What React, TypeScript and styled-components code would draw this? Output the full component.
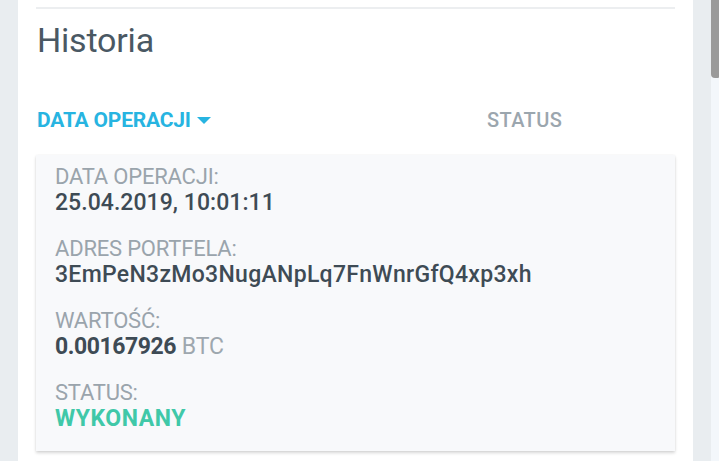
import React from "react";
import styled, { createGlobalStyle } from "styled-components";

const Global = createGlobalStyle`
  html, body { margin: 0; padding: 0; }
  body {
    background: #e9edf0;
    font-family: Roboto, "Liberation Sans", sans-serif;
    overflow: hidden;
  }
`;

const Page = styled.div`
  display: flex;
  height: 461px;
  width: 719px;
`;

const Gutter = styled.div<{ $w: number }>`
  width: ${(p) => p.$w}px;
  flex: none;
  background: #e9edf0;
`;

const Track = styled.div`
  width: 8px;
  flex: none;
  background: #f3f7fb;
  display: flex;
  flex-direction: column;
`;

const Thumb = styled.div`
  height: 78px;
  background: #9a9a9a;
  border-bottom-left-radius: 4px;
  border-bottom-right-radius: 1px;
`;

const Panel = styled.main`
  width: 675px;
  flex: none;
  background: #ffffff;
  box-sizing: border-box;
  padding: 7px 18px 0;
  display: flex;
  flex-direction: column;
`;

const Divider = styled.div`
  height: 2px;
  background: #eceef0;
`;

const Title = styled.h1`
  margin: 11px 0 0 1px;
  font-size: 34px;
  line-height: 40px;
  font-weight: 400;
  letter-spacing: -0.2px;
  color: #4a5863;
`;

const HeaderRow = styled.div`
  display: grid;
  grid-template-columns: 450px 1fr;
  margin-top: 48px;
  padding-left: 1px;
  height: 24px;
  align-items: center;
`;

const SortHead = styled.div`
  display: flex;
  align-items: center;
  gap: 6px;
  font-size: 21px;
  line-height: 24px;
  font-weight: 700;
  letter-spacing: -0.2px;
  color: #27b4e1;
`;

const PlainHead = styled.div`
  font-size: 20px;
  line-height: 24px;
  font-weight: 500;
  letter-spacing: 0.4px;
  color: #9ba6ae;
`;

const Card = styled.section`
  margin-top: 23px;
  background: #f8f9fb;
  box-shadow: 0 2px 3px rgba(0, 0, 0, 0.16), 0 0 2px rgba(0, 0, 0, 0.05);
  padding: 9px 19px 19px;
  display: flex;
  flex-direction: column;
  gap: 20px;
`;

const Field = styled.div`
  display: flex;
  flex-direction: column;
`;

const Label = styled.div`
  font-size: 22px;
  line-height: 26px;
  font-weight: 400;
  letter-spacing: -0.2px;
  color: #9aa4ac;
`;

const Value = styled.div<{ $tone?: "default" | "success"; $spacing?: number }>`
  font-size: 23px;
  line-height: 26px;
  font-weight: ${(p) => (p.$tone === "success" ? 700 : 500)};
  letter-spacing: ${(p) => p.$spacing ?? 0}px;
  color: ${(p) => (p.$tone === "success" ? "#40c8a8" : "#3e4b55")};
`;

const Amount = styled.span`
  font-weight: 700;
  letter-spacing: -0.45px;
`;

const Unit = styled.span`
  font-weight: 400;
  color: #9ea7ae;
`;

const Caret = () => (
  <svg width="14" height="7" viewBox="0 0 14 7" aria-hidden="true">
    <path d="M0 0 H14 L7 7 Z" fill="#27b4e1" />
  </svg>
);

export default function App() {
  return (
    <>
      <Global />
      <Page>
        <Gutter $w={18} />
        <Panel>
          <Divider />
          <Title>Historia</Title>
          <HeaderRow>
            <SortHead>
              DATA OPERACJI
              <Caret />
            </SortHead>
            <PlainHead>STATUS</PlainHead>
          </HeaderRow>
          <Card>
            <Field>
              <Label>DATA OPERACJI:</Label>
              <Value $spacing={0.05}>25.04.2019, 10:01:11</Value>
            </Field>
            <Field>
              <Label>ADRES PORTFELA:</Label>
              <Value $spacing={0.3}>3EmPeN3zMo3NugANpLq7FnWnrGfQ4xp3xh</Value>
            </Field>
            <Field>
              <Label>WARTOŚĆ:</Label>
              <Value>
                <Amount>0.00167926</Amount> <Unit>BTC</Unit>
              </Value>
            </Field>
            <Field>
              <Label>STATUS:</Label>
              <Value $tone="success" $spacing={0.55}>WYKONANY</Value>
            </Field>
          </Card>
        </Panel>
        <Gutter $w={18} />
        <Track>
          <Thumb />
        </Track>
      </Page>
    </>
  );
}
